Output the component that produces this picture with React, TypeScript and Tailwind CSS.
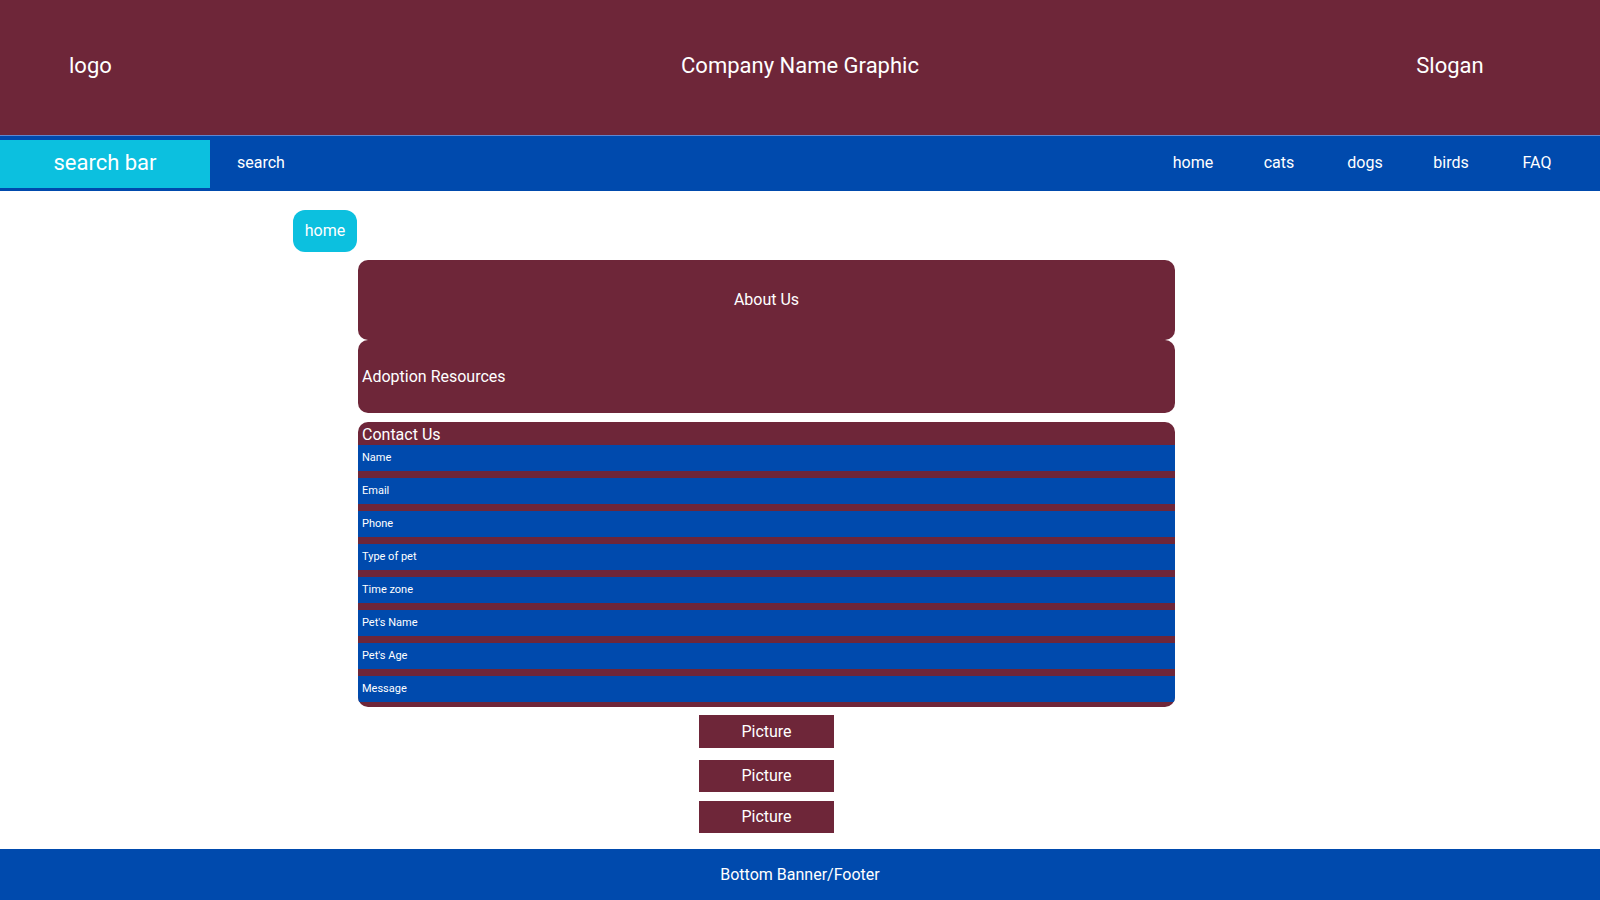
const navLinks = ['home', 'cats', 'dogs', 'birds', 'FAQ']
const fields = ['Name', 'Email', 'Phone', 'Type of pet', 'Time zone', "Pet's Name", "Pet's Age", 'Message']

function Header() {
  return (
    <header className="grid h-[135px] grid-cols-[300px_1fr_300px] items-center bg-[#6e2639] pb-[4px] text-[22px] text-white">
      <div className="pl-[69px]">logo</div>
      <div className="text-center">Company Name Graphic</div>
      <div className="text-center">Slogan</div>
    </header>
  )
}

function NavBar() {
  return (
    <nav className="flex h-[56px] items-center border-t border-[#5f86cf] bg-[#004aad] pr-[20px] text-white">
      <div className="flex h-[48px] w-[210px] items-center justify-center bg-[#0cc0df] pb-[3px] text-[22px]">search bar</div>
      <div className="ml-[27px] pb-[2px] text-[16px]">search</div>
      <div className="ml-auto flex pb-[2px]">
        {navLinks.map((l) => (
          <a key={l} className="w-[86px] text-center text-[16px]">
            {l}
          </a>
        ))}
      </div>
    </nav>
  )
}

function ContactForm() {
  return (
    <div className="mt-[9px] overflow-hidden rounded-[10px] bg-[#6e2639] pb-[5px] text-white">
      <div className="flex h-[23px] items-center px-[4px] pt-[3px] text-[16px] leading-none">Contact Us</div>
      <div className="flex flex-col gap-[7px]">
        {fields.map((f) => (
          <div key={f} className="flex h-[26px] items-center bg-[#004aad] px-[4px] text-[11px]">
            {f}
          </div>
        ))}
      </div>
    </div>
  )
}

function Picture({ className }: { className: string }) {
  return (
    <div className={`mx-auto flex w-[135px] items-center justify-center bg-[#6e2639] text-[16px] text-white ${className}`}>
      Picture
    </div>
  )
}

export default function App() {
  return (
    <div className="flex min-h-screen flex-col bg-white font-['Roboto',sans-serif]">
      <Header />
      <NavBar />
      <main className="pb-[16px] pl-[293px] pt-[19px]">
        <div className="flex h-[42px] w-[64px] items-center justify-center rounded-[12px] bg-[#0cc0df] text-[16px] text-white">
          home
        </div>
        <div className="ml-[65px] mt-[8px] w-[817px]">
          <div className="flex h-[80px] items-center justify-center rounded-[10px] bg-[#6e2639] text-[16px] text-white">
            About Us
          </div>
          <div className="flex h-[73px] items-center rounded-[10px] bg-[#6e2639] px-[4px] text-[16px] text-white">
            Adoption Resources
          </div>
          <ContactForm />
          <Picture className="mt-[8px] h-[33px]" />
          <Picture className="mt-[12px] h-[32px]" />
          <Picture className="mt-[9px] h-[32px]" />
        </div>
      </main>
      <footer className="mt-auto flex h-[51px] items-center justify-center bg-[#004aad] text-[16px] text-white">
        Bottom Banner/Footer
      </footer>
    </div>
  )
}
